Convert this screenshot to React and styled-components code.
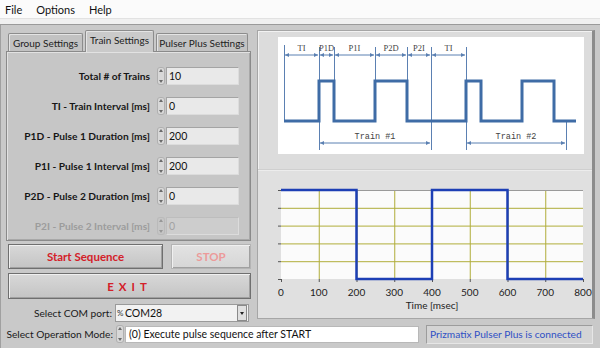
import React from 'react';
import styled, { createGlobalStyle, css } from 'styled-components';

const GlobalStyle = createGlobalStyle`
  html, body {
    margin: 0;
    padding: 0;
    width: 600px;
    height: 348px;
    overflow: hidden;
    background: #c9c9c9;
    font-family: Lato, "Open Sans", sans-serif;
  }
`;

const Window = styled.div`
  width: 600px;
  height: 348px;
  display: flex;
  flex-direction: column;
`;

const MenuBar = styled.div`
  height: 18px;
  background: #fbfbfb;
  border-bottom: 1px solid #e2e2e2;
  display: flex;
  align-items: center;
  gap: 14px;
  padding-left: 5px;
  font-size: 11px;
  color: #111;
`;

const Band = styled.div`
  height: 5px;
  background: #f0f0f0;
  border-bottom: 1px solid #9a9a9a;
`;

const Main = styled.div`
  flex: 1;
  display: flex;
  flex-direction: column;
  padding: 4px 3px 0 5px;
  border-left: 1px solid #a0a0a0;
`;

const TopRow = styled.div`
  display: flex;
  gap: 6px;
`;

const LeftCol = styled.div`
  width: 245px;
  display: flex;
  flex-direction: column;
`;

const TabStrip = styled.div`
  height: 22px;
  display: flex;
  align-items: flex-end;
  padding-left: 2px;
  gap: 2px;
`;

const Tab = styled.div`
  font-size: 10px;
  white-space: nowrap;
  color: #222;
  background: #c2c2c2;
  border: 1px solid #8c8c8c;
  border-bottom: none;
  border-radius: 2px 2px 0 0;
  box-shadow: inset 1px 1px 0 #e4e4e4;
  height: 18px;
  display: flex;
  align-items: center;
  justify-content: center;
  width: ${p => p.$w}px;
  box-sizing: border-box;
  ${p => p.$active && css`
    height: 22px;
    background: #cacaca;
    margin-bottom: -1px;
    position: relative;
    z-index: 1;
    padding-bottom: 3px;
  `}
`;

const TabBody = styled.div`
  height: 190px;
  box-sizing: border-box;
  background: #c6c6c6;
  border: 1px solid #8a8a8a;
  box-shadow: inset 1px 1px 0 #e2e2e2, inset -1px -1px 0 #a8a8a8;
  display: flex;
  flex-direction: column;
  gap: 12px;
  padding-top: 15px;
`;

const Row = styled.div`
  display: flex;
  align-items: center;
  height: 18px;
`;

const Label = styled.div`
  width: 150px;
  text-align: right;
  font-weight: 700;
  font-size: 10.2px;
  white-space: nowrap;
  color: ${p => (p.$disabled ? '#9c9c9c' : '#161616')};
  padding-right: 7px;
  box-sizing: border-box;
`;

const SpinBox = styled.div`
  width: 8px;
  height: 18px;
  flex-shrink: 0;
  display: flex;
  flex-direction: column;
  justify-content: space-between;
  align-items: center;
  background: ${p => (p.$disabled ? '#c6c6c6' : '#d8d8d8')};
  border-radius: 3px;
  box-shadow: inset 0 0 0 1px #b0b0b0;
  padding: 2px 0;
  box-sizing: border-box;
  opacity: ${p => (p.$disabled ? 0.5 : 1)};
`;

const Arrow = styled.span`
  width: 0;
  height: 0;
  border-left: 2px solid transparent;
  border-right: 2px solid transparent;
  ${p => (p.$up ? 'border-bottom: 3px solid #6a6a6a;' : 'border-top: 3px solid #6a6a6a;')}
`;

const NumField = styled.div`
  width: 73px;
  height: 18px;
  box-sizing: border-box;
  margin-left: 1px;
  background: ${p => (p.$disabled ? '#cdcdcd' : '#e9e9e9')};
  border: 1px solid ${p => (p.$disabled ? '#bdbdbd' : '#a4a4a4')};
  border-right-color: #dcdcdc;
  border-bottom-color: #dcdcdc;
  font-size: 10.5px;
  color: ${p => (p.$disabled ? '#a2a2a2' : '#111')};
  display: flex;
  align-items: center;
  padding-left: 2px;
`;

const ButtonRow = styled.div`
  display: flex;
  gap: 8px;
  margin-top: 3px;
  padding-left: 2px;
`;

const Btn = styled.div`
  height: 25px;
  width: ${p => p.$w}px;
  box-sizing: border-box;
  display: flex;
  align-items: center;
  justify-content: center;
  font-weight: 700;
  font-size: 11.5px;
  letter-spacing: ${p => p.$spacing || 0}px;
  color: ${p => (p.$disabled ? '#ec9a9a' : '#d42029')};
  background: ${p => (p.$disabled
    ? 'linear-gradient(#e2e2e2, #d6d6d6)'
    : 'linear-gradient(#d8d8d8, #c4c4c4)')};
  border: 1px solid ${p => (p.$disabled ? '#b4b4b4' : '#6f6f6f')};
  box-shadow: inset 1px 1px 0 #f0f0f0, inset -1px -1px 0 #a0a0a0;
`;

const ExitBtn = styled(Btn)`
  margin-top: 4px;
  margin-left: 2px;
  height: 26px;
`;

const ComRow = styled.div`
  display: flex;
  align-items: center;
  margin-top: 5px;
  height: 18px;
`;

const PlainLabel = styled.div`
  font-size: 10.2px;
  white-space: nowrap;
  color: #1a1a1a;
  text-align: right;
  width: ${p => p.$w}px;
  flex-shrink: 0;
  padding-right: 3px;
  box-sizing: border-box;
`;

const Combo = styled.div`
  width: 134px;
  height: 18px;
  box-sizing: border-box;
  background: #f2f2f2;
  border: 1px solid #9a9a9a;
  display: flex;
  align-items: center;
  font-size: 10.5px;
  color: #111;
`;

const IoIcon = styled.span`
  font-size: 8px;
  width: 7px;
  color: #333;
  margin: 0 1px;
  line-height: 1;
`;

const ComboText = styled.span`
  flex: 1;
`;

const DropBtn = styled.div`
  width: 8px;
  height: 14px;
  margin-right: 1px;
  background: #e0e0e0;
  border: 1px solid #8a8a8a;
  display: flex;
  align-items: center;
  justify-content: center;
  &::after {
    content: '';
    border-left: 2px solid transparent;
    border-right: 2px solid transparent;
    border-top: 3px solid #222;
  }
`;

const RightCol = styled.div`
  width: 338px;
  height: 289px;
  box-sizing: border-box;
  background: #dcdcdc;
  border: 1px solid #a6a6a6;
  border-right: 3px solid #8c8c8c;
  box-shadow: inset 1px 1px 0 #f2f2f2;
  display: flex;
  flex-direction: column;
  margin-top: 1px;
`;

const DiagramArea = styled.div`
  height: 142px;
  box-sizing: border-box;
  padding: 6px 0 0 20px;
  border-bottom: 1px solid #cfcfcf;
`;

const DiagramPaper = styled.div`
  width: 306px;
  height: 117px;
  background: #ffffff;
`;

const GraphArea = styled.div`
  flex: 1;
  background: #e0e0e0;
  box-shadow: inset 0 1px 0 #ececec;
`;

const BottomRow = styled.div`
  display: flex;
  align-items: center;
  margin-top: 3px;
  height: 18px;
`;

const TextField = styled.div`
  width: 294px;
  height: 17px;
  box-sizing: border-box;
  background: #ffffff;
  border: 1px solid #b8b8b8;
  font-size: 10.5px;
  white-space: nowrap;
  color: #111;
  display: flex;
  align-items: center;
  padding-left: 3px;
  margin-left: 1px;
`;

const Status = styled.div`
  margin-left: 7px;
  width: 167px;
  height: 19px;
  box-sizing: border-box;
  background: #d4d4d4;
  border: 1px solid #9c9c9c;
  border-right-color: #e6e6e6;
  border-bottom-color: #e6e6e6;
  color: #2f50c4;
  font-size: 10.2px;
  white-space: nowrap;
  display: flex;
  align-items: center;
  padding-left: 3px;
`;

const Spinner = ({ disabled }) => (
  <SpinBox $disabled={disabled}>
    <Arrow $up />
    <Arrow />
  </SpinBox>
);

const rows = [
  { label: 'Total # of Trains', value: '10' },
  { label: 'TI - Train Interval [ms]', value: '0' },
  { label: 'P1D - Pulse 1 Duration [ms]', value: '200' },
  { label: 'P1I - Pulse 1 Interval [ms]', value: '200' },
  { label: 'P2D - Pulse 2 Duration [ms]', value: '0' },
  { label: 'P2I - Pulse 2 Interval [ms]', value: '0', disabled: true },
];

const thin = '#5b80b2';

const Dim = ({ x1, x2, y }) => (
  <g stroke={thin} fill={thin}>
    <line x1={x1 + 1} y1={y} x2={x2 - 1} y2={y} strokeWidth="1" />
    <path d={`M${x1 + 1} ${y} l4 -2 v4 z`} stroke="none" />
    <path d={`M${x2 - 1} ${y} l-4 -2 v4 z`} stroke="none" />
  </g>
);

const Timing = () => {
  const top = [
    ['TI', 6, 41],
    ['P1D', 41, 56],
    ['P1I', 56, 97],
    ['P2D', 97, 129],
    ['P2I', 129, 153],
    ['TI', 153, 188],
  ];
  return (
    <svg width="306" height="117" viewBox="0 0 306 117">
      <g stroke={thin} strokeWidth="1">
        <line x1="6.5" y1="8" x2="6.5" y2="84" />
        <line x1="41.5" y1="10" x2="41.5" y2="113" />
        <line x1="56.5" y1="10" x2="56.5" y2="84" />
        <line x1="97.5" y1="10" x2="97.5" y2="84" />
        <line x1="129.5" y1="10" x2="129.5" y2="84" />
        <line x1="153.5" y1="10" x2="153.5" y2="113" />
        <line x1="188.5" y1="10" x2="188.5" y2="113" />
        <line x1="288.5" y1="84" x2="288.5" y2="113" />
      </g>
      {top.map(([t, a, b], i) => (
        <g key={i}>
          <Dim x1={a} x2={b} y={18} />
          <text x={(a + b) / 2} y="14" fontSize="8.5" fontFamily="'Liberation Serif', serif" fill="#444" textAnchor="middle">{t}</text>
        </g>
      ))}
      <Dim x1={41} x2={153} y={106} />
      <Dim x1={188} x2={288} y={106} />
      <text x="97" y="102" fontSize="8.5" fontFamily="'Liberation Mono', monospace" fill="#444" textAnchor="middle">Train #1</text>
      <text x="238" y="102" fontSize="8.5" fontFamily="'Liberation Mono', monospace" fill="#444" textAnchor="middle">Train #2</text>
      <polyline
        points="6,84 41,84 41,44 56,44 56,84 97,84 97,44 129,44 129,84 188,84 188,44 203,44 203,84 244,84 244,44 276,44 276,84 298,84"
        fill="none"
        stroke="#3f6ca6"
        strokeWidth="3"
      />
    </svg>
  );
};

const Graph = () => {
  const x0 = 23;
  const x1 = 325;
  const y0 = 20;
  const y1 = 109;
  const sx = v => x0 + ((x1 - x0) * v) / 800;
  const ticks = [0, 100, 200, 300, 400, 500, 600, 700, 800];
  const hs = [0, 1, 2, 3, 4, 5].map(i => y0 + ((y1 - y0) * i) / 5);
  return (
    <svg width="334" height="145" viewBox="0 0 334 145">
      <rect x={x0} y={y0} width={x1 - x0} height={y1 - y0} fill="#fbfbfb" />
      <g stroke="#b0ad3a" strokeWidth="1">
        {ticks.slice(1, 8).map(t => (
          <line key={t} x1={sx(t) + 0.5} y1={y0} x2={sx(t) + 0.5} y2={y1} />
        ))}
        {hs.slice(1, 5).map(h => (
          <line key={h} x1={x0} y1={h + 0.5} x2={x1} y2={h + 0.5} />
        ))}
      </g>
      <line x1={x0} y1={y0 + 0.5} x2={x1} y2={y0 + 0.5} stroke="#9a9a9a" />
      <g stroke="#555" strokeWidth="1">
        {hs.map(h => (
          <line key={h} x1={x0 - 3} y1={h + 0.5} x2={x0} y2={h + 0.5} />
        ))}
        {ticks.map(t => (
          <line key={t} x1={sx(t) + 0.5} y1={y1} x2={sx(t) + 0.5} y2={y1 + 3} />
        ))}
      </g>
      <polyline
        points={`${x0},${y0} ${sx(200)},${y0} ${sx(200)},${y1} ${sx(400)},${y1} ${sx(400)},${y0} ${sx(600)},${y0} ${sx(600)},${y1} ${x1},${y1}`}
        fill="none"
        stroke="#1d3fb5"
        strokeWidth="2.5"
      />
      {ticks.map(t => (
        <text key={t} x={sx(t)} y="126" fontSize="10" fontFamily="Lato, sans-serif" fill="#222" textAnchor="middle">{t}</text>
      ))}
      <text x="174" y="139" fontSize="10" fontFamily="Lato, sans-serif" fill="#222" textAnchor="middle">Time [msec]</text>
    </svg>
  );
};

export default function App() {
  return (
    <>
      <GlobalStyle />
      <Window>
        <MenuBar>
          <span>File</span>
          <span>Options</span>
          <span>Help</span>
        </MenuBar>
        <Band />
        <Main>
          <TopRow>
            <LeftCol>
              <TabStrip>
                <Tab $w={75}>Group Settings</Tab>
                <Tab $w={69} $active>Train Settings</Tab>
                <Tab $w={92}>Pulser Plus Settings</Tab>
              </TabStrip>
              <TabBody>
                {rows.map(r => (
                  <Row key={r.label}>
                    <Label $disabled={r.disabled}>{r.label}</Label>
                    <Spinner disabled={r.disabled} />
                    <NumField $disabled={r.disabled}>{r.value}</NumField>
                  </Row>
                ))}
              </TabBody>
              <ButtonRow>
                <Btn $w={155}>Start Sequence</Btn>
                <Btn $w={80} $disabled>STOP</Btn>
              </ButtonRow>
              <ExitBtn $w={243} $spacing={5}>EXIT</ExitBtn>
              <ComRow>
                <PlainLabel $w={109}>Select COM port:</PlainLabel>
                <Combo>
                  <IoIcon>%</IoIcon>
                  <ComboText>COM28</ComboText>
                  <DropBtn />
                </Combo>
              </ComRow>
            </LeftCol>
            <RightCol>
              <DiagramArea>
                <DiagramPaper>
                  <Timing />
                </DiagramPaper>
              </DiagramArea>
              <GraphArea>
                <Graph />
              </GraphArea>
            </RightCol>
          </TopRow>
          <BottomRow>
            <PlainLabel $w={110}>Select Operation Mode:</PlainLabel>
            <Spinner />
            <TextField>(0) Execute pulse sequence after START</TextField>
            <Status>Prizmatix Pulser Plus is connected</Status>
          </BottomRow>
        </Main>
      </Window>
    </>
  );
}
